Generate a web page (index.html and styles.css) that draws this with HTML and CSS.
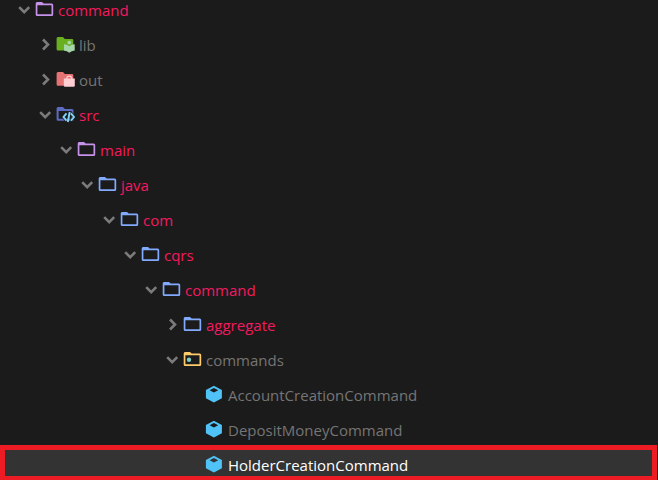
FILE: index.html
```html
<!DOCTYPE html>
<html lang="en">
<head>
    <meta charset="UTF-8">
    <meta name="viewport" content="width=device-width, initial-scale=1.0">
    <title>Explorer</title>
    <link rel="stylesheet" href="styles.css">
</head>
<body>
    <!-- Shared icons -->
    <svg class="icon-defs" aria-hidden="true">
        <symbol id="chevron-down" viewBox="0 0 14 14">
            <path d="M2.200 4.200L7.200 9.200L12.200 4.200" fill="none" stroke="#7b7b7b" stroke-width="2.600"/>
        </symbol>
        <symbol id="chevron-right" viewBox="0 0 14 14">
            <path d="M5 1.500L10 6.500L5 11.500" fill="none" stroke="#7b7b7b" stroke-width="2.600"/>
        </symbol>
        <symbol id="folder" viewBox="0 0 19 18">
            <path fill="currentColor" fill-rule="evenodd" d="M2 2H7L8.700 3.500H16.700Q18.200 3.500 18.200 5V14.500Q18.200 16 16.700 16H2.200Q0.700 16 0.700 14.500V3.500Q0.700 2 2 2ZM2.400 5.300V14.200H16.500V5.300Z"/>
        </symbol>
        <symbol id="folder-lib" viewBox="0 -2 19 18">
            <path fill="#6aaf20" d="M2 0H7L8.800 1.900H16Q17.300 1.900 17.300 3.200V13.500H2Q0.600 13.500 0.600 12V1.500Q0.600 0 2 0Z"/>
            <circle cx="13.300" cy="5.600" r="1.900" fill="#a5d6a7"/>
            <path fill="#a5d6a7" d="M8 7.300Q11 7.300 13.300 9.300Q15.500 7.300 18.700 7.300V13.500Q15.500 13.700 13.300 15.800Q11 13.700 8 13.500Z"/>
        </symbol>
        <symbol id="folder-out" viewBox="0 -2 19 18">
            <path fill="#e57373" d="M2 0H7L8.800 1.900H16Q17.300 1.900 17.300 3.200V13.700H2Q0.600 13.700 0.600 12.200V1.500Q0.600 0 2 0Z"/>
            <path fill="#ffcdd2" d="M7.800 6.500H18.800V13.400Q18.800 14.700 17.500 14.700H9.100Q7.800 14.700 7.800 13.400Z"/>
            <path fill="none" stroke="#ffcdd2" stroke-width="1.300" d="M10.800 7Q10.800 4.200 13.300 4.200Q15.800 4.200 15.800 7"/>
        </symbol>
        <symbol id="folder-src" viewBox="0 -2 19 18">
            <path fill="#5c6bc0" fill-rule="evenodd" d="M2 0H7L8.800 1.900H16Q17.500 1.900 17.500 3.400V13.700H2Q0.600 13.700 0.600 12.200V1.500Q0.600 0 2 0ZM2.600 4V11.800H15.600V4Z"/>
            <path fill="none" stroke="#1b1b1b" stroke-width="3.200" d="M10.500 6.300L7.500 10L10.500 13.700M15 6.300L18 10L15 13.700"/>
            <path fill="none" stroke="#81d4fa" stroke-width="1.900" d="M10.500 6.300L7.500 10L10.500 13.700M15 6.300L18 10L15 13.700M13.700 5L11.800 15"/>
        </symbol>
        <symbol id="cube" viewBox="0 0 19 18">
            <path fill="#4fc3f7" fill-rule="evenodd" d="M8.900 0.800L16.900 5V13.200L8.900 17.600L0.900 13.200V5ZM8.900 2.900L4.600 5.200L8.900 7.600L13.200 5.200Z"/>
        </symbol>
    </svg>

    <nav class="explorer" aria-label="Files">
        <ul class="tree">
            <li><button class="row level-0 changed" type="button"><svg class="chevron"><use href="#chevron-down"/></svg><svg class="icon purple"><use href="#folder"/></svg><span class="name">command</span></button></li>
            <li><button class="row level-1" type="button"><svg class="chevron"><use href="#chevron-right"/></svg><svg class="icon"><use href="#folder-lib"/></svg><span class="name">lib</span></button></li>
            <li><button class="row level-1" type="button"><svg class="chevron"><use href="#chevron-right"/></svg><svg class="icon"><use href="#folder-out"/></svg><span class="name">out</span></button></li>
            <li><button class="row level-1 changed" type="button"><svg class="chevron"><use href="#chevron-down"/></svg><svg class="icon"><use href="#folder-src"/></svg><span class="name">src</span></button></li>
            <li><button class="row level-2 changed" type="button"><svg class="chevron"><use href="#chevron-down"/></svg><svg class="icon purple"><use href="#folder"/></svg><span class="name">main</span></button></li>
            <li><button class="row level-3 changed" type="button"><svg class="chevron"><use href="#chevron-down"/></svg><svg class="icon blue"><use href="#folder"/></svg><span class="name">java</span></button></li>
            <li><button class="row level-4 changed" type="button"><svg class="chevron"><use href="#chevron-down"/></svg><svg class="icon blue"><use href="#folder"/></svg><span class="name">com</span></button></li>
            <li><button class="row level-5 changed" type="button"><svg class="chevron"><use href="#chevron-down"/></svg><svg class="icon blue"><use href="#folder"/></svg><span class="name">cqrs</span></button></li>
            <li><button class="row level-6 changed" type="button"><svg class="chevron"><use href="#chevron-down"/></svg><svg class="icon blue"><use href="#folder"/></svg><span class="name">command</span></button></li>
            <li><button class="row level-7 changed" type="button"><svg class="chevron"><use href="#chevron-right"/></svg><svg class="icon blue"><use href="#folder"/></svg><span class="name">aggregate</span></button></li>
            <li><button class="row level-7" type="button"><svg class="chevron"><use href="#chevron-down"/></svg><svg class="icon yellow"><use href="#folder"/><circle cx="6" cy="9.800" r="2.200" fill="#80cbc4"/></svg><span class="name">commands</span></button></li>
            <li><button class="row level-8" type="button"><span class="chevron"></span><svg class="icon"><use href="#cube"/></svg><span class="name">AccountCreationCommand</span></button></li>
            <li><button class="row level-8" type="button"><span class="chevron"></span><svg class="icon"><use href="#cube"/></svg><span class="name">DepositMoneyCommand</span></button></li>
            <li class="selected"><button class="row level-8" type="button" aria-current="true"><span class="chevron"></span><svg class="icon"><use href="#cube"/></svg><span class="name">HolderCreationCommand</span></button></li>
        </ul>
    </nav>
</body>
</html>
```

FILE: styles.css
```css
body {
    margin: 0;
    background-color: #1b1b1b;
    font-family: "Open Sans", "Noto Sans", sans-serif;
}

.icon-defs {
    display: none;
}

.explorer {
    overflow: hidden;
}

/* the list is scrolled a little under the top edge */
.tree {
    list-style: none;
    margin: -10px 0 0;
    padding: 0;
}

.row {
    display: flex;
    align-items: center;
    box-sizing: border-box;
    width: 100%;
    height: 35px;
    border: 0;
    padding: 5px 0 0;
    background: none;
    color: #757575;
    font-family: inherit;
    font-size: 15px;
    line-height: 24px;
    text-align: left;
    white-space: nowrap;
    cursor: pointer;
}

.changed {
    color: #f5195f;
}

.chevron {
    flex: none;
    width: 14px;
    height: 14px;
    margin-right: 4px;
}

.icon {
    flex: none;
    width: 19px;
    height: 18px;
    margin: 0 4px 2px 0;
}

.purple {
    color: #c792ea;
}

.blue {
    color: #82aaff;
}

.yellow {
    color: #ffcb6b;
}

/* indentation */
.level-0 { padding-left: 17px; }
.level-1 { padding-left: 38px; }
.level-2 { padding-left: 59px; }
.level-3 { padding-left: 80px; }
.level-4 { padding-left: 102px; }
.level-5 { padding-left: 123px; }
.level-6 { padding-left: 144px; }
.level-7 { padding-left: 165px; }
.level-8 { padding-left: 187px; }

.selected {
    margin-right: 1px;
    border: 5px solid #ed1c24;
    border-bottom-width: 4px;
    background-color: #333333;
}

.selected .row {
    height: 26px;
    padding-top: 3px;
    padding-left: 182px;
    color: #ffffff;
}
```
